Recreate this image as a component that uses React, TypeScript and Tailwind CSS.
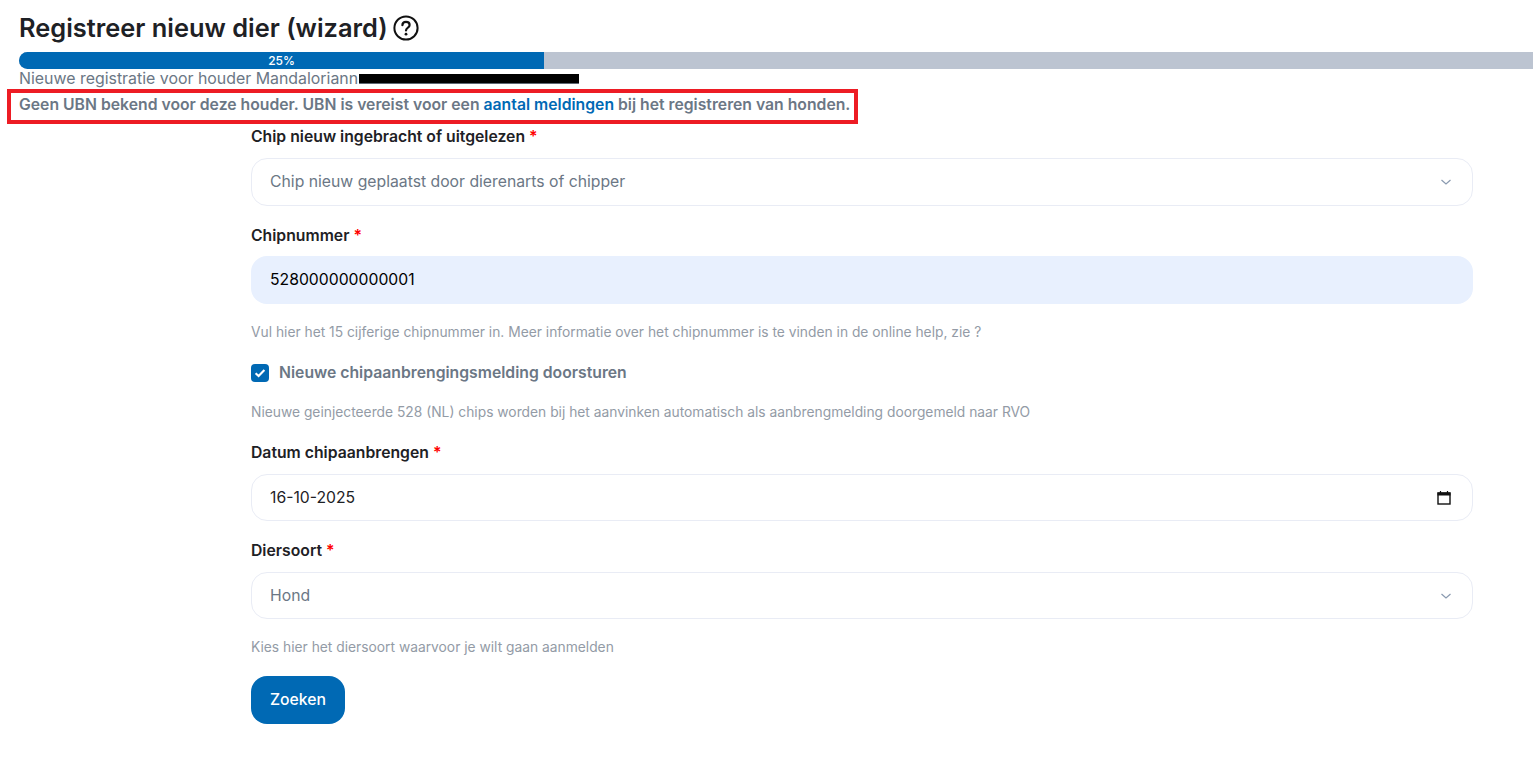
import React from "react";

const font = { fontFamily: "Inter, 'Liberation Sans', sans-serif" };

function Label({ children }: { children: React.ReactNode }) {
  return (
    <div className="text-[15.75px] leading-[22px] font-semibold text-[#1e2125] h-[22px]">
      {children} <span className="text-[#ff0000]">*</span>
    </div>
  );
}

function Chevron() {
  return (
    <svg width="16" height="16" viewBox="0 0 16 16" fill="none" className="shrink-0">
      <path d="M3.5 6l4.5 4 4.5-4" stroke="#8a9ab0" strokeWidth="1.2" />
    </svg>
  );
}

function Select({ value, h }: { value: string; h: string }) {
  return (
    <div className={`${h} flex items-center justify-between rounded-2xl border border-[#e9ecf5] bg-white pl-[18px] pr-[18px] text-[15.75px] text-[#6b7785]`}>
      <span>{value}</span>
      <Chevron />
    </div>
  );
}

export default function App() {
  return (
    <div style={font} className="relative h-[771px] w-[1533px] overflow-hidden bg-white">
      <div className="pl-[19px] pt-[14px]">
        <div className="flex h-[28px] items-center gap-[5px]">
          <h1 className="text-[25.4px] leading-[28px] font-semibold text-[#1e2125]">Registreer nieuw dier (wizard)</h1>
          <svg width="26" height="26" viewBox="0 0 26 26" fill="none">
            <circle cx="13" cy="13" r="11.6" stroke="#111" strokeWidth="2" />
            <path d="M9.4 10.2c0-2 1.6-3.4 3.6-3.4s3.6 1.3 3.6 3.1c0 2.8-3.6 2.9-3.6 5.6" stroke="#111" strokeWidth="2.2" strokeLinecap="round" />
            <circle cx="13" cy="19.2" r="1.4" fill="#111" />
          </svg>
        </div>
        <div className="mt-[10px] flex h-[17px] w-[1514px] overflow-hidden rounded-l-full bg-[#bcc4d1]">
          <div className="flex w-[525px] items-center justify-center bg-[#0069b4] text-[12px] font-medium text-white">25%</div>
        </div>
        <div className="flex h-[20px] items-center text-[15.9px] leading-[20px] text-[#6b7785]">
          <span>Nieuwe registratie voor houder Mandaloriann</span>
          <span className="ml-[1px] h-[10px] w-[220px] border-b border-[#5f6772] bg-black"></span>
        </div>
        <p className="mt-[5px] text-[15.75px] leading-[22px] font-semibold text-[#6b7785]">
          Geen UBN bekend voor deze houder. UBN is vereist voor een <span className="text-[#0069b4]">aantal meldingen</span> bij het registreren van honden.
        </p>
      </div>

      <div className="absolute left-[7px] top-[89px] h-[35px] w-[851px] border-4 border-[#ed1c24]"></div>

      <div className="ml-[251px] mt-[10px] w-[1222px]">
        <Label>Chip nieuw ingebracht of uitgelezen</Label>
        <div className="mt-[10px]">
          <Select value="Chip nieuw geplaatst door dierenarts of chipper" h="h-[48px]" />
        </div>

        <div className="mt-[19px]"><Label>Chipnummer</Label></div>
        <div className="mt-[9px] flex h-[48px] items-center rounded-2xl bg-[#e8f0fe] pl-[19px] text-[15.75px] text-black">528000000000001</div>
        <p className="mt-[18px] h-[20px] text-[13.8px] leading-[20px] text-[#939ba6]">Vul hier het 15 cijferige chipnummer in. Meer informatie over het chipnummer is te vinden in de online help, zie ?</p>

        <div className="mt-[20px] flex h-[22px] items-center gap-[10px]">
          <span className="flex h-[18px] w-[18px] items-center justify-center rounded-[4px] bg-[#0069b4]">
            <svg width="12" height="12" viewBox="0 0 12 12" fill="none">
              <path d="M1.6 6.2l3 2.9 5.8-6" stroke="#fff" strokeWidth="2.1" />
            </svg>
          </span>
          <span className="text-[15.75px] font-semibold text-[#6b7785]">Nieuwe chipaanbrengingsmelding doorsturen</span>
        </div>
        <p className="mt-[18px] h-[20px] text-[13.8px] leading-[20px] text-[#939ba6]">Nieuwe geinjecteerde 528 (NL) chips worden bij het aanvinken automatisch als aanbrengmelding doorgemeld naar RVO</p>

        <div className="mt-[20px]"><Label>Datum chipaanbrengen</Label></div>
        <div className="mt-[10px] flex h-[47px] items-center justify-between rounded-2xl border border-[#e9ecf5] bg-white pl-[18px] pr-[20px] text-[15.75px] text-[#1e2125]">
          <span>16-10-2025</span>
          <svg width="16" height="16" viewBox="0 0 16 16" fill="none">
            <rect x="2" y="3" width="12" height="11" fill="none" stroke="#111" strokeWidth="1.4" />
            <rect x="1.5" y="2.5" width="13" height="3" fill="#111" />
            <path d="M4.5 1v2M11.5 1v2" stroke="#111" strokeWidth="1.2" />
          </svg>
        </div>

        <div className="mt-[19px]"><Label>Diersoort</Label></div>
        <div className="mt-[10px]">
          <Select value="Hond" h="h-[47px]" />
        </div>
        <p className="mt-[18px] h-[20px] text-[13.8px] leading-[20px] text-[#939ba6]">Kies hier het diersoort waarvoor je wilt gaan aanmelden</p>

        <button className="mt-[19px] h-[48px] w-[94px] rounded-2xl bg-[#0069b4] text-[15.75px] font-medium text-white">Zoeken</button>
      </div>
    </div>
  );
}
